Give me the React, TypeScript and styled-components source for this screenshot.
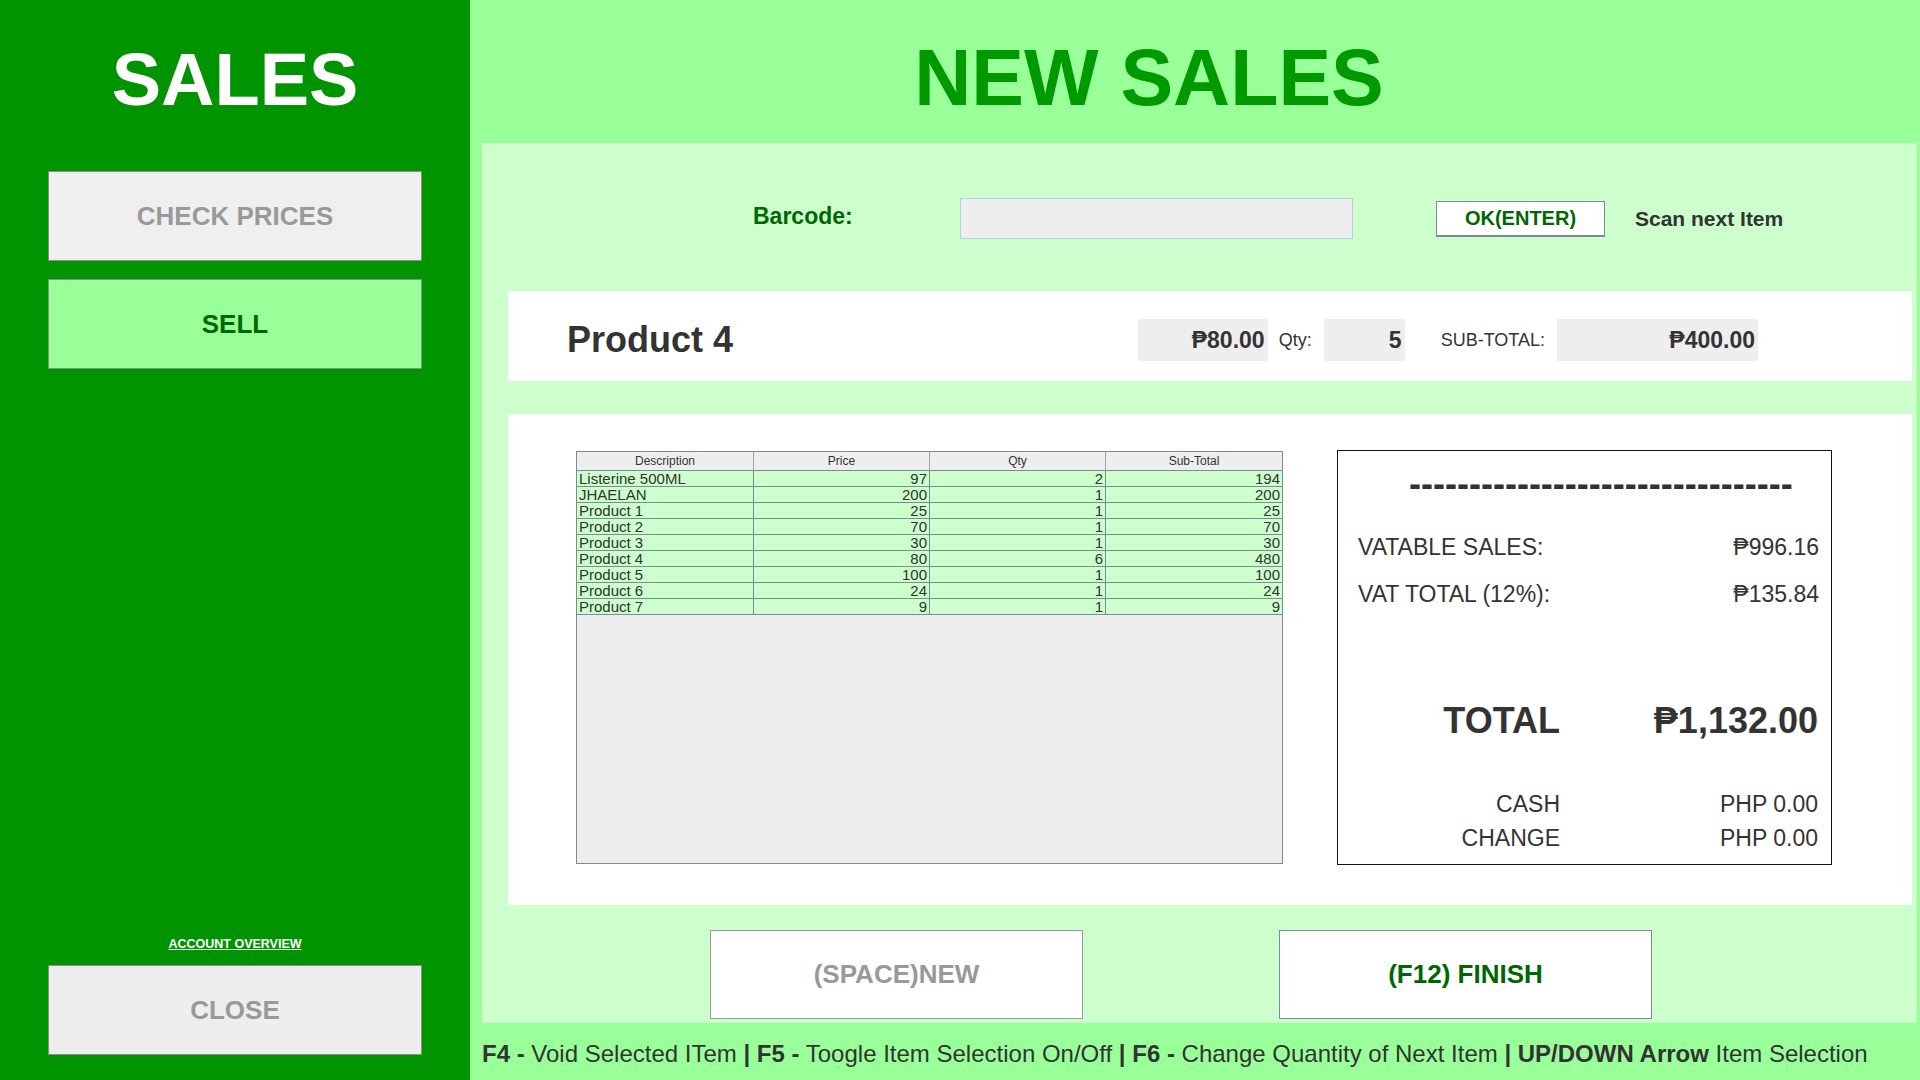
import React from "react";
import styled, { createGlobalStyle } from "styled-components";

const FONT = `"Liberation Sans", Arial, "DejaVu Sans", sans-serif`;

const GlobalStyle = createGlobalStyle`
  html, body { margin: 0; padding: 0; }
  body { font-family: ${FONT}; color: #333; background: #99ff99; }
  * { box-sizing: border-box; }
`;

const Screen = styled.div`
  display: flex;
  width: 1920px;
  height: 1080px;
  overflow: hidden;
`;

/* ---------- Sidebar ---------- */
const Sidebar = styled.aside`
  width: 470px;
  flex: none;
  background: #009400;
  display: flex;
  flex-direction: column;
  align-items: center;
  padding: 43px 0 25px;
`;

const SideTitle = styled.h1`
  margin: 0 0 54px;
  font-family: ${FONT};
  font-size: 74px;
  line-height: 74px;
  font-weight: 700;
  color: #ffffff;
`;

const SideButton = styled.button<{ $active?: boolean }>`
  width: 374px;
  height: 90px;
  flex: none;
  margin: 0 0 18px;
  border: 1px solid #8c8c8c;
  background: ${(p) => (p.$active ? "#99ff99" : "#efefef")};
  color: ${(p) => (p.$active ? "#006600" : "#999999")};
  font-family: ${FONT};
  font-size: 26px;
  font-weight: 700;
  line-height: 1;
  cursor: pointer;
`;

const CloseButton = styled(SideButton)`
  margin: 0;
  background: #eeeeee;
`;

const Spacer = styled.div`
  flex: 1;
`;

const AccountLink = styled.a`
  display: block;
  margin-bottom: 14px;
  font-size: 12.5px;
  line-height: 13px;
  font-weight: 700;
  color: #ffffff;
  text-decoration: underline;
`;

/* ---------- Main ---------- */
const Main = styled.main`
  flex: 1;
  background: #99ff99;
  display: flex;
  flex-direction: column;
`;

const Header = styled.header`
  height: 143px;
  flex: none;
  padding: 38px 92px 0 0;
  text-align: center;
`;

const HeaderTitle = styled.h2`
  margin: 0;
  font-family: ${FONT};
  font-size: 79px;
  line-height: 79px;
  font-weight: 700;
  color: #009900;
`;

const Panel = styled.section`
  height: 880px;
  flex: none;
  margin: 0 3px 0 12px;
  background: #ccffcc;
  padding: 0 5px 0 26px;
  display: flex;
  flex-direction: column;
`;

const BarcodeRow = styled.div`
  display: flex;
  align-items: center;
  height: 41px;
  margin: 55px 0 52px;
  padding-left: 245px;
`;

const BarcodeLabel = styled.label`
  width: 207px;
  padding-bottom: 5px;
  font-size: 23px;
  line-height: 23px;
  font-weight: 700;
  color: #006600;
`;

const BarcodeInput = styled.input`
  width: 393px;
  height: 41px;
  border: 1px solid #b8cfe5;
  background: #eeeeee;
  outline: none;
  font-family: ${FONT};
  font-size: 20px;
`;

const OkButton = styled.button`
  margin-left: 83px;
  width: 169px;
  height: 36px;
  border: 1px solid #7a8a99;
  border-bottom-width: 2px;
  background: #ffffff;
  color: #006600;
  font-family: ${FONT};
  font-size: 20px;
  font-weight: 700;
  padding: 0;
`;

const ScanHint = styled.span`
  margin-left: 30px;
  font-size: 21px;
  font-weight: 700;
  color: #333;
`;

const ProductPanel = styled.div`
  height: 90px;
  flex: none;
  background: #ffffff;
  display: flex;
  align-items: center;
  padding: 8px 154px 0 59px;
`;

const ProductName = styled.div`
  flex: 1;
  font-size: 36px;
  line-height: 36px;
  font-weight: 700;
  color: #333;
`;

const ValueBox = styled.div<{ $w: number }>`
  width: ${(p) => p.$w}px;
  height: 42px;
  background: #eeeeee;
  text-align: right;
  padding-right: 3px;
  font-size: 23px;
  line-height: 42px;
  font-weight: 700;
  color: #333;
`;

const FieldLabel = styled.span<{ $left: number }>`
  margin: 0 12px 0 ${(p) => p.$left}px;
  font-size: 18px;
  color: #333;
`;

const TablePanel = styled.div`
  margin-top: 33px;
  height: 491px;
  flex: none;
  background: #ffffff;
  display: flex;
  align-items: flex-start;
  gap: 54px;
  padding: 37px 0 0 68px;
`;

const Table = styled.div`
  width: 707px;
  height: 413px;
  border: 1px solid #7a8a99;
  background: #eeeeee;
`;

const GridRow = styled.div<{ $head?: boolean }>`
  display: grid;
  grid-template-columns: 177px 176px 176px 1fr;
  height: ${(p) => (p.$head ? 19 : 16)}px;
  border-bottom: 1px solid #7a8a99;
  background: ${(p) => (p.$head ? "#eeeeee" : "#ccffcc")};
`;

const Cell = styled.div<{ $head?: boolean; $num?: boolean }>`
  border-right: 1px solid ${(p) => (p.$head ? "#9aa6b2" : "#7a8a99")};
  padding: 0 2px 0 2px;
  font-size: ${(p) => (p.$head ? 12 : 15)}px;
  line-height: ${(p) => (p.$head ? 18 : 15)}px;
  text-align: ${(p) => (p.$head ? "center" : p.$num ? "right" : "left")};
  color: #333;
  white-space: nowrap;
  overflow: hidden;
  &:last-child {
    border-right: none;
  }
`;

const Receipt = styled.div`
  width: 495px;
  height: 415px;
  margin-top: -1px;
  border: 1px solid #111111;
  background: #ffffff;
  padding: 0 12px 0 20px;
  display: flex;
  flex-direction: column;
`;

const Dashes = styled.div`
  margin-top: 15px;
  padding-left: 51px;
  font-size: 36px;
  line-height: 36px;
  font-weight: 700;
  color: #333;
  white-space: nowrap;
`;

const VatRow = styled.div<{ $top: number }>`
  display: flex;
  justify-content: space-between;
  margin-top: ${(p) => p.$top}px;
  font-size: 23px;
  line-height: 23px;
  color: #333;
`;

const SumRow = styled.div<{ $top: number; $big?: boolean }>`
  display: grid;
  grid-template-columns: 202px 1fr;
  margin-top: ${(p) => p.$top}px;
  font-size: ${(p) => (p.$big ? 36 : 23)}px;
  line-height: ${(p) => (p.$big ? 36 : 23)}px;
  font-weight: ${(p) => (p.$big ? 700 : 400)};
  color: #333;
  text-align: right;
`;

const SumValue = styled.span`
  padding-right: 1px;
`;

const ActionRow = styled.div`
  display: flex;
  gap: 196px;
  margin-top: 25px;
  padding-left: 202px;
`;

const ActionButton = styled.button<{ $primary?: boolean }>`
  width: 373px;
  height: 89px;
  background: #ffffff;
  border: 1px solid ${(p) => (p.$primary ? "#7a8a99" : "#9a9a9a")};
  color: ${(p) => (p.$primary ? "#006600" : "#999999")};
  font-family: ${FONT};
  font-size: 26px;
  font-weight: 700;
`;

const Footer = styled.footer`
  flex: 1;
  display: flex;
  align-items: center;
  padding: 5px 0 0 12px;
  font-size: 24px;
  color: #333;
  white-space: nowrap;
`;

const items = [
  ["Listerine 500ML", 97, 2, 194],
  ["JHAELAN", 200, 1, 200],
  ["Product 1", 25, 1, 25],
  ["Product 2", 70, 1, 70],
  ["Product 3", 30, 1, 30],
  ["Product 4", 80, 6, 480],
  ["Product 5", 100, 1, 100],
  ["Product 6", 24, 1, 24],
  ["Product 7", 9, 1, 9],
] as const;

export default function App() {
  return (
    <>
      <GlobalStyle />
      <Screen>
        <Sidebar>
          <SideTitle>SALES</SideTitle>
          <SideButton>CHECK PRICES</SideButton>
          <SideButton $active>SELL</SideButton>
          <Spacer />
          <AccountLink>ACCOUNT OVERVIEW</AccountLink>
          <CloseButton>CLOSE</CloseButton>
        </Sidebar>
        <Main>
          <Header>
            <HeaderTitle>NEW SALES</HeaderTitle>
          </Header>
          <Panel>
            <BarcodeRow>
              <BarcodeLabel>Barcode:</BarcodeLabel>
              <BarcodeInput />
              <OkButton>OK(ENTER)</OkButton>
              <ScanHint>Scan next Item</ScanHint>
            </BarcodeRow>
            <ProductPanel>
              <ProductName>Product 4</ProductName>
              <ValueBox $w={130}>₱80.00</ValueBox>
              <FieldLabel $left={11}>Qty:</FieldLabel>
              <ValueBox $w={81}>5</ValueBox>
              <FieldLabel $left={36}>SUB-TOTAL:</FieldLabel>
              <ValueBox $w={201}>₱400.00</ValueBox>
            </ProductPanel>
            <TablePanel>
              <Table>
                <GridRow $head>
                  <Cell $head>Description</Cell>
                  <Cell $head>Price</Cell>
                  <Cell $head>Qty</Cell>
                  <Cell $head>Sub-Total</Cell>
                </GridRow>
                {items.map(([d, p, q, s]) => (
                  <GridRow key={d}>
                    <Cell>{d}</Cell>
                    <Cell $num>{p}</Cell>
                    <Cell $num>{q}</Cell>
                    <Cell $num>{s}</Cell>
                  </GridRow>
                ))}
              </Table>
              <Receipt>
                <Dashes>--------------------------------</Dashes>
                <VatRow $top={34}>
                  <span>VATABLE SALES:</span>
                  <span>₱996.16</span>
                </VatRow>
                <VatRow $top={24}>
                  <span>VAT TOTAL (12%):</span>
                  <span>₱135.84</span>
                </VatRow>
                <SumRow $top={97} $big>
                  <span>TOTAL</span>
                  <SumValue>₱1,132.00</SumValue>
                </SumRow>
                <SumRow $top={54}>
                  <span>CASH</span>
                  <SumValue>PHP 0.00</SumValue>
                </SumRow>
                <SumRow $top={11}>
                  <span>CHANGE</span>
                  <SumValue>PHP 0.00</SumValue>
                </SumRow>
              </Receipt>
            </TablePanel>
            <ActionRow>
              <ActionButton>(SPACE)NEW</ActionButton>
              <ActionButton $primary>(F12) FINISH</ActionButton>
            </ActionRow>
          </Panel>
          <Footer>
            <span>
              <b>F4 -</b> Void Selected ITem <b>|</b> <b>F5 -</b> Toogle Item Selection On/Off <b>|</b>{" "}
              <b>F6 -</b> Change Quantity of Next Item <b>|</b> <b>UP/DOWN Arrow</b> Item Selection
            </span>
          </Footer>
        </Main>
      </Screen>
    </>
  );
}
